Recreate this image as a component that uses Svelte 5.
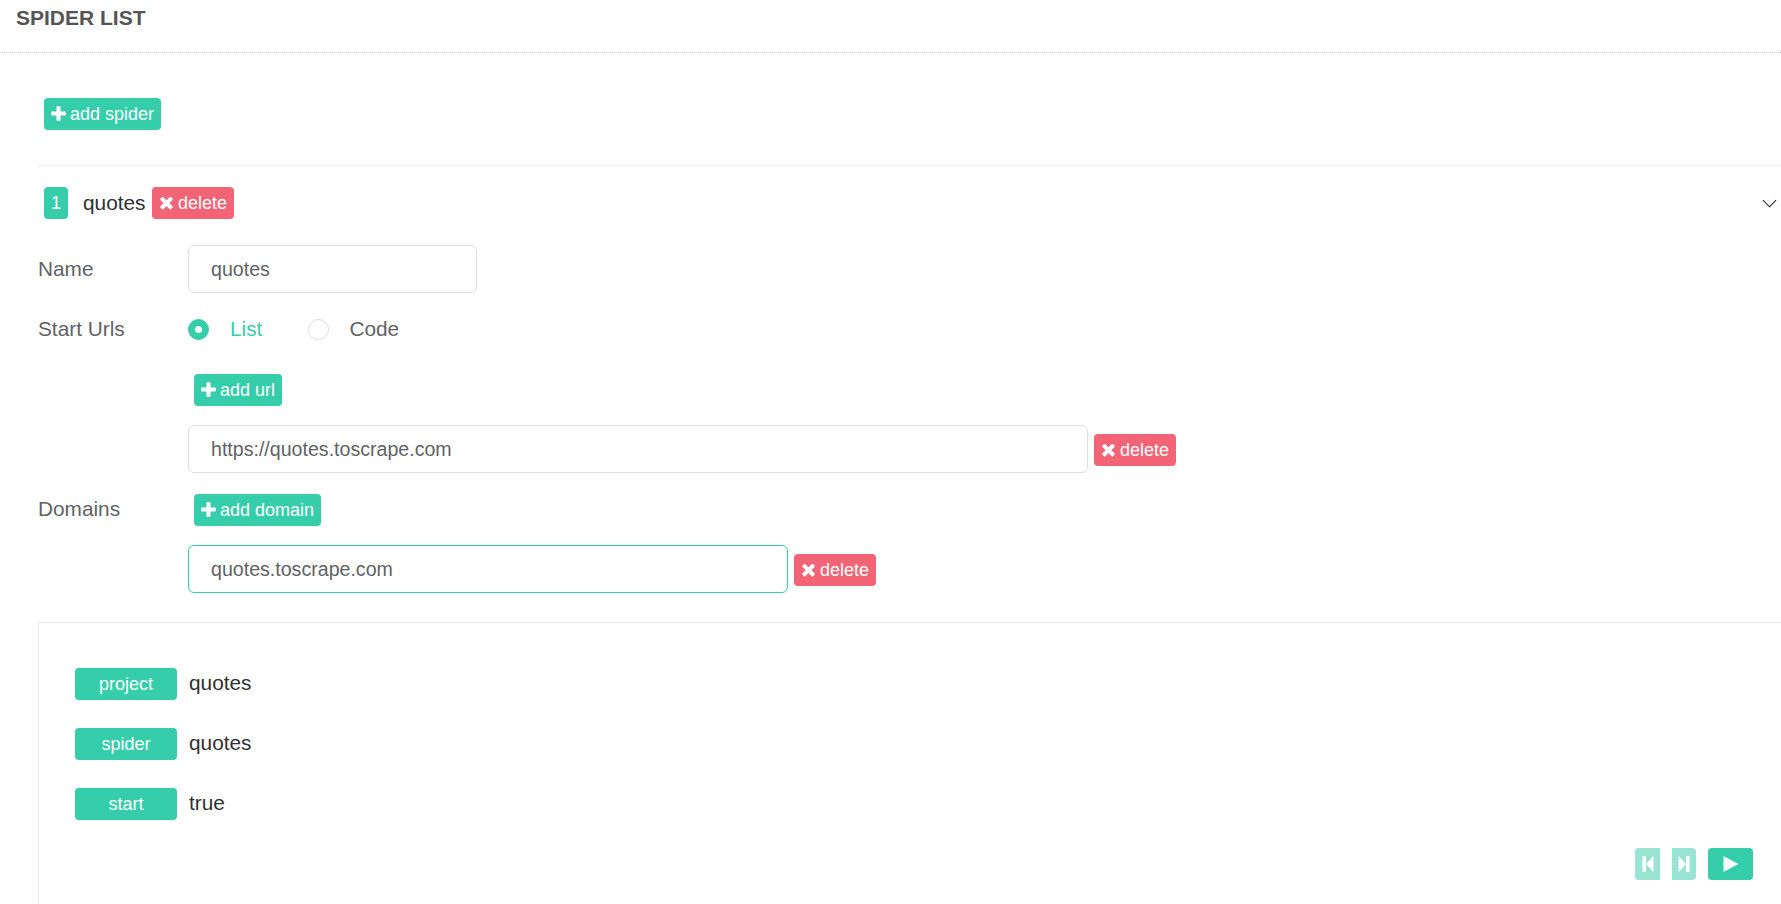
<script>
  const plus = "M1408 800v192q0 40-28 68t-68 28h-416v416q0 40-28 68t-68 28h-192q-40 0-68-28t-28-68v-416h-416q-40 0-68-28t-28-68v-192q0-40 28-68t68-28h416v-416q0-40 28-68t68-28h192q40 0 68 28t28 68v416h416q40 0 68 28t28 68z";
  const times = "M1298 1322q0 40-28 68l-136 136q-28 28-68 28t-68-28l-294-294-294 294q-28 28-68 28t-68-28l-136-136q-28-28-28-68t28-68l294-294-294-294q-28-28-28-68t28-68l136-136q28-28 68-28t68 28l294 294 294-294q28-28 68-28t68 28l136 136q28 28 28 68t-28 68l-294 294 294 294q28 28 28 68z";
  const tags = [["project", "quotes"], ["spider", "quotes"], ["start", "true"]];
</script>

{#snippet addBtn(text)}
  <button class="btn green"><svg class="ico" viewBox="0 0 1408 1792"><path d={plus} /></svg>{text}</button>
{/snippet}
{#snippet delBtn()}
  <button class="btn red"><svg class="ico" viewBox="0 0 1408 1792"><path d={times} /></svg>delete</button>
{/snippet}

<div class="page">
  <header class="title">SPIDER LIST</header>
  <main class="content">
    <div class="add-row">{@render addBtn("add spider")}</div>
    <section class="item">
      <div class="item-head">
        <span class="num">1</span>
        <span class="item-name">quotes</span>
        {@render delBtn()}
        <svg class="chev" viewBox="0 0 16 9"><path d="M1 1l7 7 7-7" /></svg>
      </div>

      <div class="row name-row">
        <span class="label">Name</span>
        <input class="input short" value="quotes" />
      </div>

      <div class="row radio-row">
        <span class="label">Start Urls</span>
        <span class="radio on"></span><span class="radio-text on-text">List</span>
        <span class="radio"></span><span class="radio-text code-text">Code</span>
      </div>

      <div class="row add-url">
        <span class="label"></span>
        <span class="btn-indent">{@render addBtn("add url")}</span>
      </div>

      <div class="row input-row">
        <span class="label"></span>
        <input class="input long" value="https://quotes.toscrape.com" />
        {@render delBtn()}
      </div>

      <div class="row add-url">
        <span class="label raised">Domains</span>
        <span class="btn-indent">{@render addBtn("add domain")}</span>
      </div>

      <div class="row input-row">
        <span class="label"></span>
        <input class="input mid focus" value="quotes.toscrape.com" />
        {@render delBtn()}
      </div>

      <div class="box">
        {#each tags as [k, v]}
          <div class="tag-row"><span class="tag">{k}</span><span class="tag-val">{v}</span></div>
        {/each}
        <div class="player">
          <button class="pbtn prev" aria-label="previous"><svg viewBox="0 0 14 16"><path d="M1.5 0h3.5v16H1.5zM12.5 0v16L5 8z" /></svg></button>
          <button class="pbtn next" aria-label="next"><svg viewBox="0 0 14 16"><path d="M9 0h3.500v16H9zM1.500 0v16L9 8z" /></svg></button>
          <button class="pbtn play" aria-label="play"><svg viewBox="0 0 16 16"><path d="M.5 0v16L15.500 8z" /></svg></button>
        </div>
      </div>
    </section>
  </main>
</div>

<style>
  :global(body) { margin: 0; background: #fff; }
  .page {
    height: 904px;
    width: 1781px;
    overflow: hidden;
    font-family: "Liberation Sans", Arial, sans-serif;
    color: #606266;
  }
  .title {
    height: 52px;
    padding-left: 16px;
    border-bottom: 1px dotted #ccc;
    font-size: 21px;
    font-weight: 700;
    line-height: 36px;
    color: #555;
  }
  .content { padding-left: 38px; }
  .add-row { padding: 45px 0 35px 6px; display: flex; }
  .item { border-top: 1px solid #ebeef5; }
  .btn {
    display: inline-flex;
    align-items: center;
    height: 32px;
    padding: 0 7px;
    border: 0;
    border-radius: 4px;
    color: #fff;
    font: 18px "Liberation Sans", Arial, sans-serif;
    white-space: nowrap;
  }
  .green { background: #36cdab; }
  .red { background: #f26476; }
  .ico { width: 15px; height: 19px; margin-right: 4px; fill: #fff; flex: none; transform: translateY(-1px); }
  .item-head {
    display: flex;
    align-items: center;
    height: 32px;
    padding: 21px 4px 26px 6px;
    font-size: 20.8px;
    color: #303133;
  }
  .num {
    width: 24px;
    height: 32px;
    background: #36cdab;
    color: #fff;
    border-radius: 4px;
    font-size: 18px;
    line-height: 32px;
    text-align: center;
  }
  .item-name { margin: 0 6.6px 0 15px; padding-bottom: 1px; }
  .chev { margin-left: auto; width: 15px; height: 9px; fill: none; stroke: #222; stroke-width: 1.1; }
  .row { display: flex; align-items: center; font-size: 20.8px; }
  .label { width: 150px; flex: none; }
  .label.raised { padding-bottom: 2px; }
  .input {
    box-sizing: border-box;
    height: 48px;
    padding: 0 22px;
    border: 1px solid #dcdfe6;
    border-radius: 6px;
    font: 19.6px "Liberation Sans", Arial, sans-serif;
    color: #606266;
    background: #fff;
    outline: none;
  }
  .input.short { width: 289px; }
  .input.long { width: 900px; margin-right: 6px; }
  .input.mid { width: 600px; margin-right: 6px; }
  .input.focus { border-color: #36cdab; }
  .input-row .btn { margin-top: 2px; }
  .radio-row { height: 48px; margin-top: 12px; }
  .radio {
    box-sizing: border-box;
    width: 21px;
    height: 21px;
    border-radius: 50%;
    border: 1px solid #dcdfe6;
    background: #fff;
    position: relative;
  }
  .radio.on { background: #36cdab; border-color: #36cdab; }
  .radio.on::after {
    content: "";
    position: absolute;
    left: 6px;
    top: 6px;
    width: 7px;
    height: 7px;
    border-radius: 50%;
    background: #fff;
  }
  .radio-text { margin-left: 21px; margin-right: 46px; }
  .code-text { margin-left: 20px; }
  .on-text { color: #36cdab; }
  .add-url { margin-top: 21px; }
  .btn-indent { margin-left: 6px; display: flex; }
  .input-row { margin-top: 19px; }
  .box {
    margin: 29px -9px 0 0;
    padding: 45px 36px 0 36px;
    height: 300px;
    border: 1px solid #e4e9f0;
  }
  .tag-row { display: flex; align-items: center; margin-bottom: 28px; font-size: 20.8px; color: #303133; }
  .tag {
    width: 102px;
    height: 32px;
    line-height: 32px;
    background: #36cdab;
    border-radius: 4px;
    color: #fff;
    font-size: 18px;
    text-align: center;
    margin-right: 12px;
  }
  .tag-val { padding-bottom: 2px; }
  .player { display: flex; justify-content: flex-end; gap: 12px; }
  .pbtn {
    display: flex;
    align-items: center;
    justify-content: center;
    height: 32px;
    padding: 0;
    border: 0;
    background: #36cdab;
    border-radius: 4px;
  }
  .pbtn svg { fill: #fff; display: block; height: 16px; width: 16px; }
  .prev { width: 25px; opacity: .5; border-radius: 4px 0 0 4px; }
  .next { width: 24px; opacity: .5; border-radius: 0 4px 4px 0; }
  .prev svg, .next svg { width: 14px; }
  .play { width: 45px; }
</style>
